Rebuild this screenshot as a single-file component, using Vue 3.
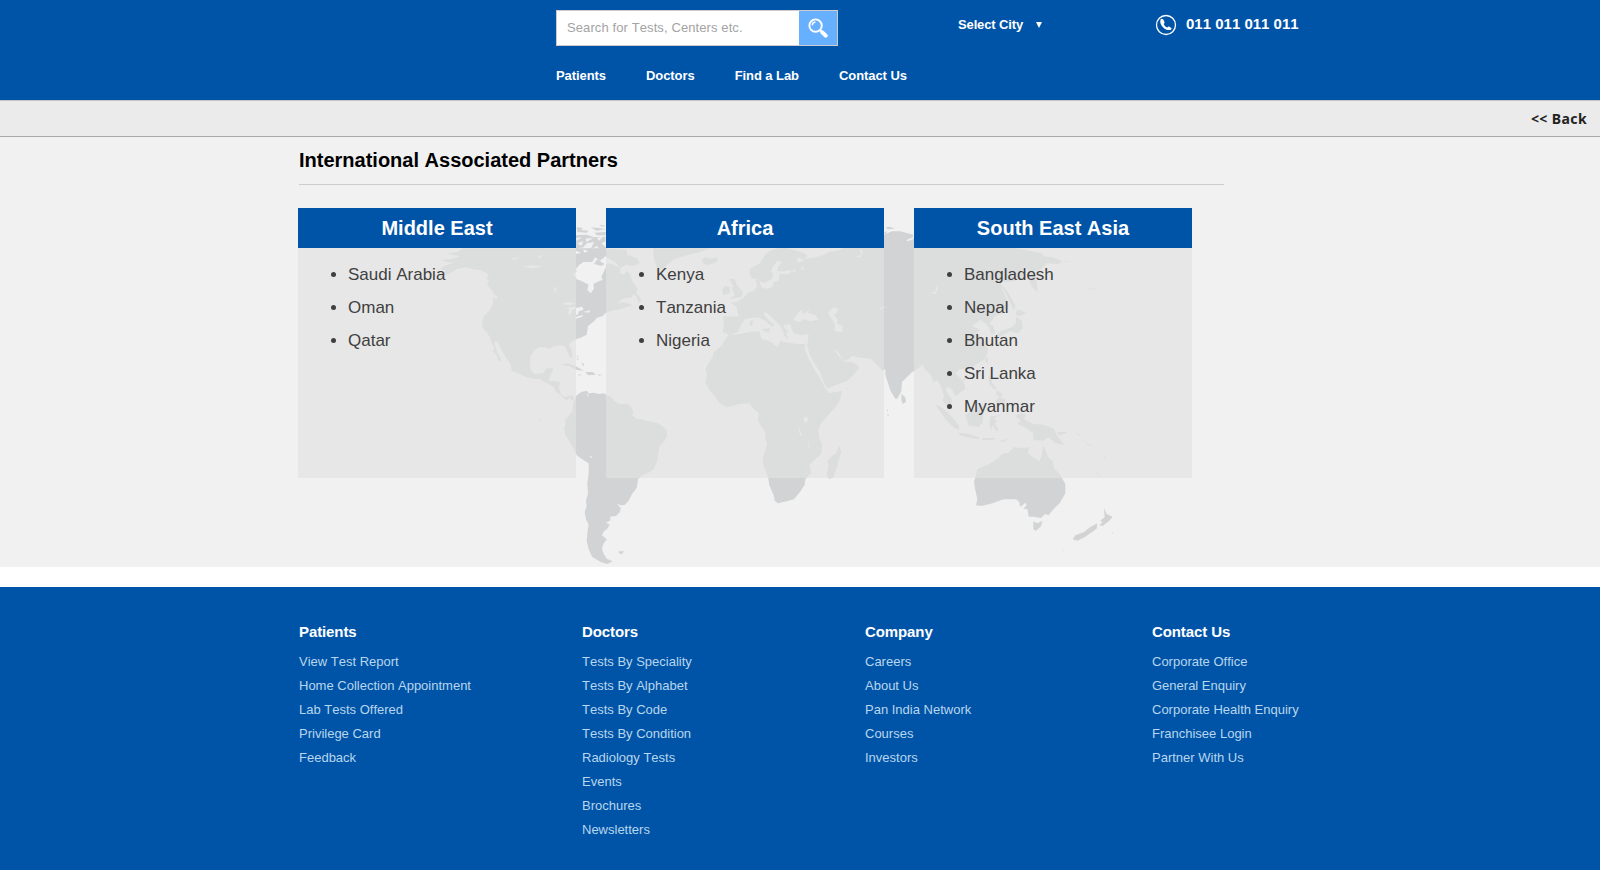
<script setup>
const nav = ['Patients', 'Doctors', 'Find a Lab', 'Contact Us']

const regions = [
  { name: 'Middle East', countries: ['Saudi Arabia', 'Oman', 'Qatar'] },
  { name: 'Africa', countries: ['Kenya', 'Tanzania', 'Nigeria'] },
  { name: 'South East Asia', countries: ['Bangladesh', 'Nepal', 'Bhutan', 'Sri Lanka', 'Myanmar'] },
]

const footer = [
  { title: 'Patients', links: ['View Test Report', 'Home Collection Appointment', 'Lab Tests Offered', 'Privilege Card', 'Feedback'] },
  { title: 'Doctors', links: ['Tests By Speciality', 'Tests By Alphabet', 'Tests By Code', 'Tests By Condition', 'Radiology Tests', 'Events', 'Brochures', 'Newsletters'] },
  { title: 'Company', links: ['Careers', 'About Us', 'Pan India Network', 'Courses', 'Investors'] },
  { title: 'Contact Us', links: ['Corporate Office', 'General Enquiry', 'Corporate Health Enquiry', 'Franchisee Login', 'Partner With Us'] },
]
</script>

<template>
  <div class="page">
    <header class="header">
      <div class="top-row">
        <div class="search">
          <span class="placeholder">Search for Tests, Centers etc.</span>
          <span class="search-btn">
            <svg width="20" height="20" viewBox="0 0 20 20">
              <circle cx="7.6" cy="7.6" r="6.2" fill="none" stroke="#fff" stroke-width="1.9" />
              <path d="M4.2 7.4a3.6 3.6 0 0 1 3.2-3.4" fill="none" stroke="#fff" stroke-width="1.3" />
              <path d="M11.9 11.9l2 2" stroke="#fff" stroke-width="1.8" />
              <path d="M14.3 14.3l3.4 3.4" stroke="#fff" stroke-width="4" stroke-linecap="round" />
            </svg>
          </span>
        </div>
        <div class="city">Select City <i class="caret"></i></div>
        <div class="phone">
          <svg width="22" height="22" viewBox="0 0 22 22">
            <circle cx="11" cy="11" r="9.5" fill="none" stroke="#fff" stroke-width="1.3" />
            <path d="M5.600 5.400C4.600 7.500 5.600 11 8.200 13.500s6 3.300 8 2c.5-.4.4-1 0-1.400l-1.700-1.300c-.6-.4-1-.3-1.500.1l-.8.500c-1.500-.6-2.800-1.900-3.500-3.500l.6-.7c.4-.5.400-.9.100-1.500L8.100 5.300c-.6-.9-2-.9-2.500.1z" fill="#fff" />
          </svg>
          <span>011 011 011 011</span>
        </div>
      </div>
      <nav class="nav">
        <a v-for="n in nav" :key="n">{{ n }}</a>
      </nav>
    </header>

    <div class="back-bar"><a>&lt;&lt; Back</a></div>

    <main class="main">
      <svg class="map" width="700" height="355" viewBox="440 215 700 355">
        <!-- Americas -->
        <g transform="translate(440 210) scale(.33333)">
          <path d="M70 115L52 126 20 130 60 139 34 147 2 150 24 156 42 158 12 168 0 176 18 182 10 190-30 203-70 214-25 208 20 196 50 178 75 172 95 177 120 180 138 188 145 195 139 206 147 212 141 220 150 236 157 240 162 252 174 262 168 268 158 262 160 276 150 300 130 320 126 340 130 358 140 366 150 382 155 400 163 412 160 425 172 438 174 450 185 457 180 442 172 428 166 412 163 396 172 394 180 412 190 428 196 440 212 462 215 482 260 502 288 508 300 506 318 518 340 530 346 544 366 558 378 571 390 564 400 574 402 560 392 556 376 562 362 552 356 532 362 517 345 513 326 514 332 492 340 480 336 474 318 476 310 490 284 492 272 480 270 460 272 438 282 422 296 412 316 412 328 418 342 408 366 406 376 410 386 434 392 444 398 440 394 418 386 404 396 394 408 388 420 384 440 374 442 362 444 348 462 334 470 324 488 318 497 309 520 300 536 300 560 290 578 286 550 276 530 282 548 266 575 262 580 252 590 262 596 280 604 268 588 248 594 238 578 216 570 192 560 182 552 194 540 190 542 176 528 168 510 160 498 162 498 115z" />
          <path d="M498 116L560 120 562 134 590 145 600 160 578 168 560 164 540 174 528 158 508 146 498 140zM640 115L642 148 650 172 668 180 680 165 704 146 740 136 780 126 812 115z" />
          <path d="M410 52L430 54 422 60 446 62 440 68 412 66zM452 52L476 54 496 58 470 62zM408 76L440 74 462 82 496 80 498 118 480 124 472 108 452 118 462 96 440 100 430 112 408 116zM480 44L498 48 484 50zM464 68L498 66 496 76 470 76z" />
          <path class="water" d="M408 84L426 82 410 92zM436 86L460 84 440 96zM412 100L430 94 424 108zM470 84L488 80 478 92zM484 100L498 94 498 112zM408 122L424 128 408 132zM430 118L446 124 432 128z" />
          <path class="water" d="M408 176L418 164 430 156 456 156 466 142 480 152 498 138 498 170 490 188 484 200 488 210 476 214 460 222 462 236 452 250 442 240 446 224 426 214 410 208 400 192 410 184z" />
          <path d="M462 162L472 148 484 156 494 162 484 168z" />
          <path class="water" d="M366 282L384 276 406 280 390 286zM378 294L402 290 410 294 396 300 390 316 384 310 388 298zM408 294L428 290 430 300 416 304 414 314 408 314zM404 322L430 314 426 320 408 326zM430 306L452 300 446 308zM342 228L350 236 344 252zM246 170L280 166 310 170 276 174zM210 146L240 142 222 150zM290 140L310 134 300 144z" />
          <path d="M360 464L384 460 410 470 432 482 410 480 388 468zM436 486L458 486 468 494 444 496zM414 493L426 495 416 497zM474 493L488 494 476 497zM410 444L418 448 412 450zM424 456L432 462 430 470zM412 436L416 440 410 442z" />
          <path d="M404 570L410 556 424 546 440 542 446 550 462 548 476 552 492 550 500 556 514 562 524 574 540 582 560 582 572 588 580 608 576 616 590 626 606 628 626 634 650 638 670 650 680 660 681 676 674 692 658 710 654 736 652 752 642 776 626 788 606 796 594 808 590 834 576 852 566 872 554 885 542 886 530 880 542 894 540 906 528 918 510 920 512 930 498 938 509 944 502 956 492 964 486 976 500 988 490 1002 486 1016 490 1030 500 1046 518 1054 502 1062 482 1056 456 1040 446 1018 440 994 442 970 446 944 438 928 434 906 440 890 438 872 444 850 442 820 446 790 446 760 430 750 410 736 398 710 376 674 372 656 378 636 374 630 384 620 398 602 400 580z" />
          <path class="water" d="M443 548L446 556 442 560zM450 736L458 742 452 744z" />
          <path d="M536 1024L552 1024 546 1032 536 1030zM298 628L304 630 300 633z" />
        </g>

        <!-- Europe, Africa and mainland Asia -->
        <g transform="translate(690 210) scale(.33333)">
          <path d="M115 376L150 372 178 366 208 364 214 386 244 396 262 412 272 392 292 398 320 402 346 402 344 418 360 454 374 480 390 504 404 532 418 549 440 546 457 542 450 570 436 592 412 618 392 642 385 660 388 684 396 702 394 732 370 752 358 766 364 790 346 808 344 824 330 846 312 868 290 874 264 880 254 872 252 858 238 826 234 800 220 764 218 742 232 704 226 684 226 668 204 632 206 608 192 598 178 580 150 582 110 592 88 578 76 562 60 542 46 518 52 492 46 480 54 462 68 442 70 428 96 406 104 390z" />
          <path class="water" d="M340 624L352 620 354 632 344 640zM324 644L336 678 330 676zM354 684L360 720 356 712z" />
          <path d="M448 706L454 724 446 752 438 780 430 804 416 806 410 792 416 770 412 752 428 736 438 730zM34 150L46 142 64 146 78 142 84 152 70 160 50 166 40 160zM96 240L106 228 120 232 120 248 100 256zM118 208L134 206 140 226 158 244 156 260 120 268 134 254 126 238 130 228zM186 348L190 334 182 330 178 346zM212 358L240 354 238 368zM296 402L308 402 300 406z" />
          <path d="M100 318L146 320 140 290 122 278 140 276 160 264 172 250 196 240 202 226 196 212 206 204 212 224 208 206 186 206 178 188 180 176 210 160 224 136 240 122 264 115 290 114 340 128 352 138 340 148 320 142 324 158 338 154 344 146 368 144 400 136 418 126 440 122 500 100 582 74 606 64 630 64 654 70 670 74 668 84 700 96 980 115 1056 130 1064 140 1084 140 1116 154 1106 162 1070 160 1054 178 1034 184 1040 216 1042 246 1026 230 1012 196 1016 180 1002 168 996 182 1006 200 970 214 930 216 938 240 948 262 956 288 940 306 914 320 898 342 908 346 916 366 906 376 896 352 886 340 872 330 846 348 872 360 860 368 880 392 894 420 886 446 846 472 808 478 796 490 822 516 826 536 798 558 792 552 788 540 772 530 768 544 784 564 786 594 778 600 766 582 758 574 762 556 752 526 742 510 730 516 722 494 704 478 698 464 674 482 664 488 636 516 634 544 622 566 616 566 602 544 592 514 586 496 586 478 578 482 562 466 542 446 502 442 486 438 470 452 458 450 444 424 432 416 446 438 464 456 484 456 504 466 506 476 490 496 470 514 440 524 412 536 402 520 390 486 370 456 358 430 352 408 356 372 334 376 312 370 306 360 300 342 284 344 280 350 296 366 288 370 296 386 284 378 276 356 264 340 244 320 226 306 220 312 240 334 254 344 246 350 228 334 204 322 180 324 164 328 150 350 144 366 120 376 98 366 102 342z" />
          <path class="water" d="M310 330L324 308 334 300 342 312 362 294 352 308 376 316 386 328 362 334 342 328 326 336zM414 308L430 292 446 296 440 308 432 314 444 330 440 340 458 348 456 366 434 364 434 342 422 322zM214 232L208 212 220 220 244 208 250 192 242 184 248 170 262 152 276 156 264 170 262 184 280 184 304 180 298 192 268 192 266 212 252 216 246 232 228 236zM306 182L318 176 314 188zM332 176L338 168 342 182zM566 294L592 290 570 298zM722 250L736 244 742 222 744 236 736 252zM498 140L514 134 508 116 518 124 512 142zM650 90L668 82 670 88 652 94z" />
          <path d="M586 52L600 50 614 56 594 58zM582 68L592 62 588 74zM634 552L646 562 648 576 638 582 634 570z" />
          <path d="M590 600L594 600 593 606zM592 612L597 614 594 620zM0 126L40 115 0 115zM154 434L162 438 156 440zM470 534L478 536 471 538z" />
        </g>

        <!-- Islands, Australia and New Zealand -->
        <g transform="translate(900 210) scale(.33333)">
          <path d="M104 582L124 592 150 614 176 646 178 660 160 652 138 630 122 606zM176 668L206 672 238 682 236 688 202 682 180 676zM246 684L290 684 280 690 248 690zM298 694L326 684 310 696zM196 616L216 600 240 584 260 592 250 608 248 636 236 652 206 646zM270 620L304 614 280 624 292 634 284 640 296 662 288 662 278 644 272 664 268 640zM256 446L264 442 264 460 258 456zM188 508L200 496 202 504 192 512zM266 500L276 498 276 520 292 536 282 538 268 522zM288 540L308 552 300 562 290 554zM284 574L298 562 316 568 316 588 298 582z" />
          <path d="M344 618L362 610 378 614 372 628 400 642 430 644 462 656 470 676 492 704 466 700 446 682 430 692 400 690 400 670 374 652 354 642 362 630zM470 666L500 666 510 652 498 670 480 676zM526 664L546 680 536 676zM548 690L578 710 564 704zM584 780L606 804 596 796zM612 738L620 752 614 748z" />
          <path d="M348 320L366 332 368 354 354 370 330 364 310 374 296 382 290 374 304 362 336 352 348 340zM346 314L352 298 378 308 360 318zM300 218L322 244 346 286 342 302 324 264z" />
          <path d="M226 804L232 778 268 762 290 748 306 732 326 728 340 712 364 714 388 712 384 730 402 744 418 754 426 736 428 706 438 722 444 742 458 752 462 774 480 794 496 822 496 850 480 878 458 900 446 916 436 912 422 924 402 920 386 920 382 896 370 898 378 884 360 890 358 876 348 868 310 868 278 880 244 888 228 886 232 868 224 830 222 814z" />
          <path d="M400 934L412 940 428 932 422 950 408 962 400 958zM612 894L620 912 638 920 628 932 608 948 598 946 608 936 600 932 614 922zM592 940L590 956 556 980 532 992 518 988 526 976 552 966 570 952zM636 966L640 968 638 971zM488 1020L492 1022 489 1023z" />
          <path class="water" d="M360 892L376 878 380 886 366 900z" />
          <path d="M490 152L512 154 500 156zM560 236L592 236 570 239z" />
        </g>
      </svg>

      <div class="content">
        <h1>International Associated Partners</h1>
        <div class="cards">
          <section v-for="r in regions" :key="r.name" class="card">
            <h2>{{ r.name }}</h2>
            <ul>
              <li v-for="c in r.countries" :key="c">{{ c }}</li>
            </ul>
          </section>
        </div>
      </div>
    </main>

    <footer class="footer">
      <div v-for="col in footer" :key="col.title" class="col">
        <h3>{{ col.title }}</h3>
        <a v-for="l in col.links" :key="l">{{ l }}</a>
      </div>
    </footer>
  </div>
</template>

<style>
body { margin: 0; background: #fff; }
</style>

<style scoped>
.page {
  width: 1600px;
  height: 870px;
  overflow: hidden;
  display: flex;
  flex-direction: column;
  font-family: "Liberation Sans", Arial, sans-serif;
  font-kerning: none;
}
.header {
  flex: none;
  box-sizing: border-box;
  height: 100px;
  padding: 10px 0 0 556px;
  background: #0054a8;
  color: #fff;
  font-size: 13px;
  font-weight: bold;
}
.top-row { display: flex; height: 36px; }
.search {
  box-sizing: border-box;
  width: 282px;
  height: 36px;
  display: flex;
  justify-content: space-between;
  background: #fff;
  border: 1px solid #ccc;
}
.placeholder {
  padding-left: 10px;
  font-weight: normal;
  line-height: 34px;
  color: #a3a3a3;
  letter-spacing: .1px;
}
.search-btn {
  width: 38px;
  display: flex;
  align-items: center;
  justify-content: center;
  background: #66b0ff;
}
.city {
  display: flex;
  align-items: center;
  height: 28px;
  margin-left: 120px;
  width: 197px;
  letter-spacing: -.13px;
}
.caret {
  margin: 2px 0 0 13px;
  border: 3.5px solid transparent;
  border-top: 6px solid #fff;
  border-bottom: 0;
}
.phone { display: flex; height: 28px; font-size: 15px; }
.phone svg { margin-top: 4px; }
.phone span { margin-left: 9px; line-height: 28px; white-space: nowrap; }
.nav {
  display: flex;
  gap: 40px;
  margin-top: 20px;
  line-height: 20px;
  letter-spacing: -.07px;
}
.back-bar {
  flex: none;
  box-sizing: border-box;
  height: 37px;
  padding-right: 13px;
  border-top: 1px solid #c4c4c4;
  border-bottom: 1px solid #aaa;
  background: #ebebeb;
  text-align: right;
  font: bold 14px/36px "Noto Sans", sans-serif;
  letter-spacing: .4px;
  color: #222;
}
.main {
  flex: none;
  position: relative;
  height: 430px;
  background: #f1f1f1;
}
.map { position: absolute; left: 440px; top: 78px; fill: #d1d3d4; }
.map .water { fill: #f1f1f1; }
.content { position: relative; margin-left: 298px; width: 926px; }
h1 {
  margin: 0 0 0 1px;
  height: 47px;
  border-bottom: 1px solid #ccc;
  font-size: 20px;
  line-height: 46px;
  color: #000;
}
.cards { display: flex; gap: 30px; margin-top: 23px; }
.card { width: 278px; height: 270px; background: rgba(226, 226, 226, .68); }
.card h2 {
  margin: 0;
  height: 40px;
  line-height: 40px;
  background: #0054a8;
  color: #fff;
  font-size: 20px;
  text-align: center;
}
.card ul { margin: 0; padding: 10px 0 0 50px; }
.card li { font-size: 17px; line-height: 33px; color: #404040; }
.footer {
  flex: 1;
  margin-top: 20px;
  padding: 34px 0 0 299px;
  display: grid;
  grid-template-columns: 283px 283px 287px 1fr;
  background: #0054a8;
}
.col { display: flex; flex-direction: column; }
.col h3 {
  margin: 0 0 7px;
  font-size: 15px;
  line-height: 22px;
  letter-spacing: -.1px;
  color: #fff;
}
.col a { font-size: 13px; line-height: 24px; color: #b8d6ec; }
</style>
